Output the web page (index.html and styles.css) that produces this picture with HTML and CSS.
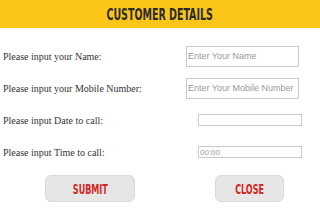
FILE: index.html
```html
<!DOCTYPE html>
<html>
<head>
  <title>Customer Details</title>
  <link rel="stylesheet" href="styles.css">
</head>
<body>
    <div class="header">
        <span class="header-title">CUSTOMER DETAILS</span>
    </div>
    <form class="details-form">
        <div class="form-row">
            <label>Please input your Name:</label>
            <input type="text" class="text-input" placeholder="Enter Your Name">
        </div>
        <div class="form-row">
            <label>Please input your Mobile Number:</label>
            <input type="text" class="text-input" placeholder="Enter Your Mobile Number">
        </div>
        <div class="form-row">
            <label>Please input Date to call:</label>
            <input type="text" class="small-input">
        </div>
        <div class="form-row">
            <label>Please input Time to call:</label>
            <input type="text" class="small-input" placeholder="00:00">
        </div>
        <div class="form-buttons">
            <button type="button" class="submit-btn"><span>SUBMIT</span></button>
            <button type="button" class="close-btn"><span>CLOSE</span></button>
        </div>
    </form>
</body>
</html>
```

FILE: styles.css
```css
/* Page */
body {
    margin: 0;
    width: 320px;
    background-color: #fff;
    font-family: 'Liberation Serif', 'Times New Roman', serif;
    color: #333;
}

/* Yellow title bar */
.header {
    height: 28px;
    background-color: #fcc519;
    display: flex;
    align-items: center;
    justify-content: center;
}

.header-title {
    display: inline-block;
    font-family: 'DejaVu Sans', sans-serif;
    font-stretch: condensed;
    font-weight: bold;
    font-size: 16px;
    color: #2b2b2b;
    transform: scaleX(0.66);
}

/* Form rows */
.details-form {
    display: flex;
    flex-direction: column;
    padding-top: 12px;
}

.form-row {
    display: flex;
    align-items: center;
    height: 32px;
    padding-left: 3px;
}

.form-row label {
    flex: 1;
    font-size: 10px;
}

.text-input {
    box-sizing: border-box;
    width: 113px;
    height: 21px;
    margin: 0 21px 0 0;
    padding: 0 1px;
    border: 1px solid #c8c8c8;
    font-family: 'Liberation Sans', Arial, sans-serif;
    font-size: 9px;
}

.small-input {
    box-sizing: border-box;
    width: 104px;
    height: 12px;
    margin: 0 18px 0 0;
    padding: 0 1px;
    border: 1px solid #c8c8c8;
    font-family: 'Liberation Sans', Arial, sans-serif;
    font-size: 8px;
}

input::placeholder {
    color: #9a9a9a;
}

/* Buttons */
.form-buttons {
    display: flex;
    margin-top: 7px;
    padding-left: 45px;
    gap: 80px;
}

.form-buttons button {
    box-sizing: border-box;
    height: 27px;
    padding: 0;
    background-color: #e6e6e6;
    border: 1px solid #dadada;
    border-radius: 6px;
    color: #d42626;
    font-family: 'DejaVu Sans', sans-serif;
    font-stretch: condensed;
    font-weight: bold;
    font-size: 14px;
}

.form-buttons button span {
    display: inline-block;
    transform: scaleX(0.64);
}

.submit-btn {
    width: 90px;
}

.close-btn {
    width: 69px;
}
```
